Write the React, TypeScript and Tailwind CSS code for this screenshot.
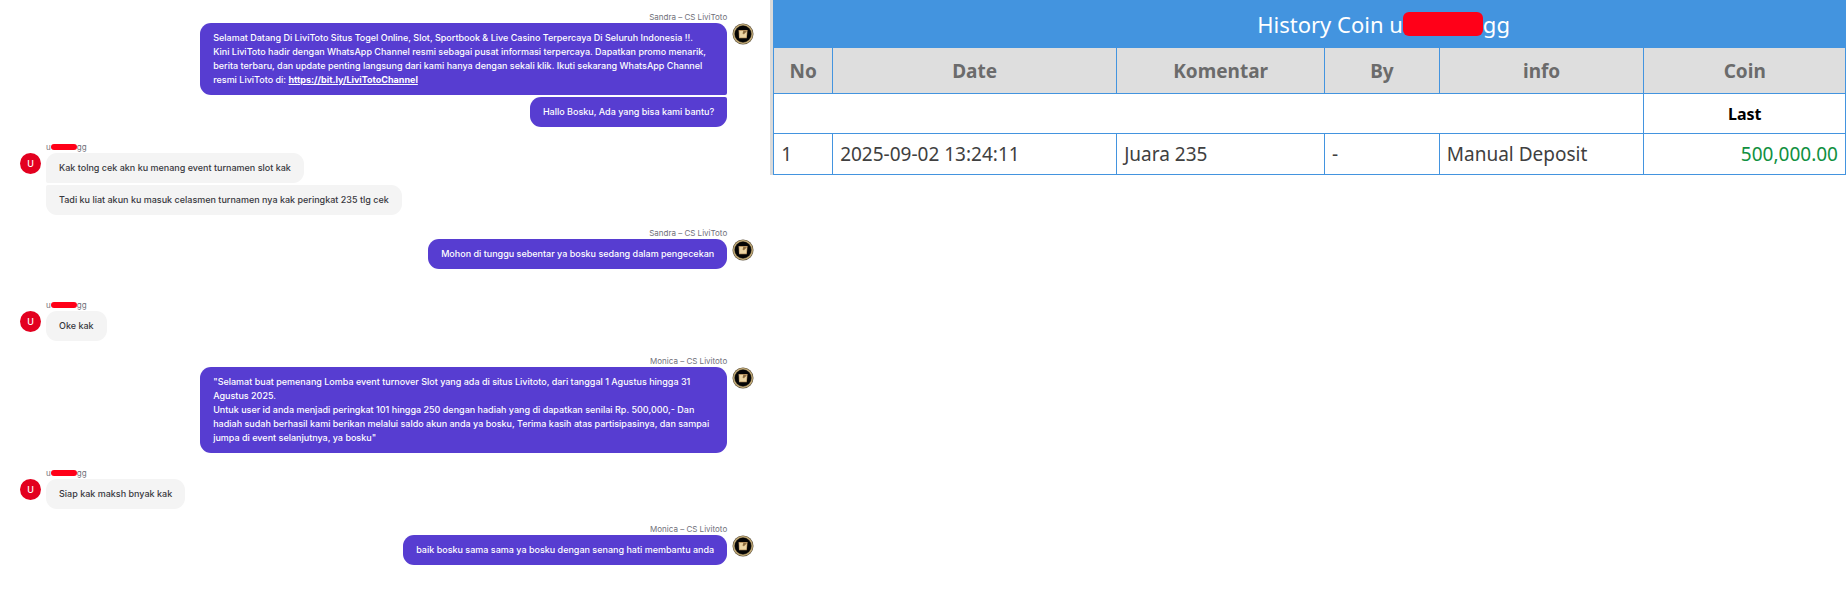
import React from 'react';
import clsx from 'clsx';

interface Message {
  author: string | null;
  fromAgent: boolean;
  gap: string;
  bubbles: React.ReactNode[];
}

const messages: Message[] = [
  {
    author: 'Sandra – CS LiviToto',
    fromAgent: true,
    gap: 'mt-[11px]',
    bubbles: [
      <>
        Selamat Datang Di LiviToto Situs Togel Online, Slot, Sportbook &amp; Live Casino Terpercaya Di Seluruh Indonesia !!.
        <br />
        Kini LiviToto hadir dengan WhatsApp Channel resmi sebagai pusat informasi terpercaya. Dapatkan promo menarik,
        berita terbaru, dan update penting langsung dari kami hanya dengan sekali klik. Ikuti sekarang WhatsApp Channel
        <br />
        resmi LiviToto di:{' '}
        <a href="https://bit.ly/LiviTotoChannel" className="font-bold underline">
          https://bit.ly/LiviTotoChannel
        </a>
      </>,
      'Hallo Bosku, Ada yang bisa kami bantu?',
    ],
  },
  {
    author: null,
    fromAgent: false,
    gap: 'mt-[14px]',
    bubbles: [
      'Kak tolng cek akn ku menang event turnamen slot kak',
      'Tadi ku liat akun ku masuk celasmen turnamen nya kak peringkat 235 tlg cek',
    ],
  },
  {
    author: 'Sandra – CS LiviToto',
    fromAgent: true,
    gap: 'mt-3',
    bubbles: ['Mohon di tunggu sebentar ya bosku sedang dalam pengecekan'],
  },
  { author: null, fromAgent: false, gap: 'mt-[30px]', bubbles: ['Oke kak'] },
  {
    author: 'Monica – CS Livitoto',
    fromAgent: true,
    gap: 'mt-[14px]',
    bubbles: [
      <>
        "Selamat buat pemenang Lomba event turnover Slot yang ada di situs Livitoto, dari tanggal 1 Agustus hingga 31
        Agustus 2025.
        <br />
        Untuk user id anda menjadi peringkat 101 hingga 250 dengan hadiah yang di dapatkan senilai Rp. 500,000,- Dan
        hadiah sudah berhasil kami berikan melalui saldo akun anda ya bosku, Terima kasih atas partisipasinya, dan sampai
        jumpa di event selanjutnya, ya bosku"
      </>,
    ],
  },
  { author: null, fromAgent: false, gap: 'mt-[14px]', bubbles: ['Siap kak maksh bnyak kak'] },
  {
    author: 'Monica – CS Livitoto',
    fromAgent: true,
    gap: 'mt-[14px]',
    bubbles: ['baik bosku sama sama ya bosku dengan senang hati membantu anda'],
  },
];

const columns = ['No', 'Date', 'Komentar', 'By', 'info', 'Coin'];

function AgentAvatar() {
  return (
    <svg viewBox="0 0 22 22" className="mt-3 h-[22px] w-[22px] shrink-0" aria-hidden="true">
      <circle cx="11" cy="11" r="10.5" fill="#5d523e" />
      <circle cx="11" cy="11" r="9.3" fill="none" stroke="#c5ad78" strokeWidth="1.3" />
      <circle cx="11" cy="11" r="8.2" fill="#050505" />
      <path d="M6.6 7h9l-.8 8.2H7z" fill="#b99562" />
      <path d="M7.4 8h4l-1 2.4 1.4 1.2 3-3-.6 5.8H7.6z" fill="#ecd5a4" />
      <path d="M11.6 7.6l-.8 2.6 1 .8 2.6-2.6z" fill="#8a6b40" />
    </svg>
  );
}

function MaskedName() {
  return (
    <span className="flex items-center">
      u<span className="h-[6px] w-[26px] rounded-full bg-[#ff0018]" />gg
    </span>
  );
}

function MessageGroup({ message }: { message: Message }) {
  const { author, fromAgent, gap, bubbles } = message;

  return (
    <div className={clsx('flex items-start gap-[5px]', gap, fromAgent ? 'flex-row-reverse pr-4' : 'pl-5')}>
      {fromAgent ? (
        <AgentAvatar />
      ) : (
        <div className="mt-3 flex h-[21px] w-[21px] shrink-0 items-center justify-center rounded-full bg-[#e3001f] text-[9px] font-medium text-white">
          U
        </div>
      )}
      <div className={clsx('flex max-w-[527px] flex-col', fromAgent ? 'items-end' : 'items-start')}>
        <div className="flex h-3 items-center text-[8px] leading-3 text-[#70707a]">{author ?? <MaskedName />}</div>
        <div className={clsx('flex flex-col gap-[2px]', fromAgent ? 'items-end' : 'items-start')}>
          {bubbles.map((bubble, i) => (
            <div
              key={i}
              className={clsx(
                'rounded-[11px] px-[13px] py-2 text-[9px] leading-[14px] font-medium',
                fromAgent ? 'bg-[#573dd1] text-white' : 'bg-[#f4f4f4] text-[#38383e]',
                // stacked bubbles share a squared corner on the sender's side
                i < bubbles.length - 1 && (fromAgent ? 'rounded-br-[2px]' : 'rounded-bl-[2px]'),
                i > 0 && (fromAgent ? 'rounded-tr-[2px]' : 'rounded-tl-[2px]')
              )}
            >
              {bubble}
            </div>
          ))}
        </div>
      </div>
    </div>
  );
}

function CoinHistory() {
  return (
    <table className="w-full table-fixed border-collapse border border-[#4394df] font-['Noto_Sans',sans-serif] text-[19px] leading-6 text-[#404040] [&_td]:border [&_td]:border-[#4394df] [&_td]:px-[7px] [&_th]:border [&_th]:border-[#4394df]">
      <caption className="bg-[#4394df] text-[22px] leading-6 text-white">
        <span className="flex h-[47px] items-center justify-center pl-[148px]">
          History Coin u<span className="h-6 w-20 rounded-md bg-[#ff0018]" />gg
        </span>
      </caption>
      <colgroup>
        <col className="w-[5.5%]" />
        <col className="w-[26.5%]" />
        <col className="w-[19.4%]" />
        <col className="w-[10.7%]" />
        <col className="w-[19.1%]" />
        <col className="w-[18.8%]" />
      </colgroup>
      <thead className="bg-[#dedede] text-[#6b6b6b]">
        <tr className="h-[46px]">
          {columns.map((column) => (
            <th key={column} className="font-bold">{column}</th>
          ))}
        </tr>
      </thead>
      <tbody>
        <tr className="h-10">
          <td colSpan={5} />
          <td className="text-center text-base font-bold text-black">Last</td>
        </tr>
        <tr className="h-[41px]">
          <td>1</td>
          <td>2025-09-02 13:24:11</td>
          <td>Juara 235</td>
          <td>-</td>
          <td>Manual Deposit</td>
          <td className="text-right text-[#109040]">500,000.00</td>
        </tr>
      </tbody>
    </table>
  );
}

function App() {
  return (
    <main className="flex min-h-screen items-start bg-white font-['Inter',sans-serif]">
      <section className="w-[41.7%] shrink-0">
        {messages.map((message, i) => (
          <MessageGroup key={i} message={message} />
        ))}
      </section>
      <section className="min-w-0 flex-1 border-l-3 border-[#dadada] pr-px">
        <CoinHistory />
      </section>
    </main>
  );
}

export default App;
